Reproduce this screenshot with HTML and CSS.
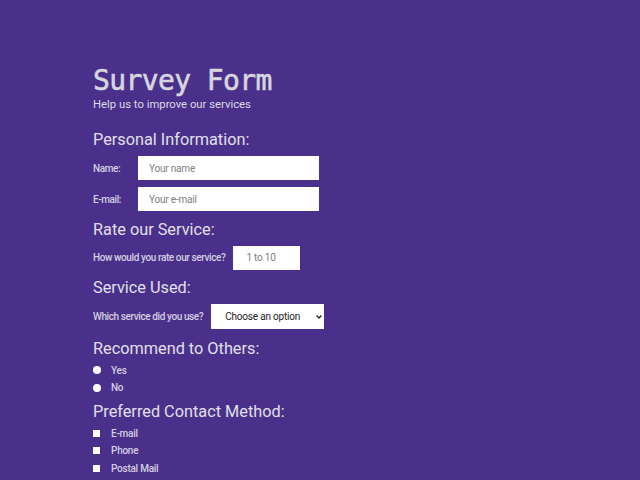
FILE: index.html
```html
<!DOCTYPE html>
<html lang="en">
<head>
<meta charset="utf-8">
<title>Survey Form</title>
<link rel="stylesheet" href="styles.css">
</head>
<body>
<main class="survey">
  <header class="intro">
    <h1 class="title">Survey Form</h1>
    <p class="subtitle">Help us to improve our services</p>
  </header>
  <form class="form">
    <h2 class="section-title">Personal Information:</h2>
    <div class="row">
      <label class="label label-fixed" for="name">Name:</label>
      <input class="field field-wide" id="name" type="text" placeholder="Your name">
    </div>
    <div class="row">
      <label class="label label-fixed" for="email">E-mail:</label>
      <input class="field field-wide" id="email" type="email" placeholder="Your e-mail">
    </div>

    <h2 class="section-title">Rate our Service:</h2>
    <div class="row">
      <label class="label" for="rate">How would you rate our service?</label>
      <input class="field field-num" id="rate" type="text" placeholder="1 to 10">
    </div>

    <h2 class="section-title">Service Used:</h2>
    <div class="row">
      <label class="label" for="service">Which service did you use?</label>
      <div class="select-wrap">
        <select class="select" id="service">
          <option>Choose an option</option>
        </select>
        <svg class="select-arrow" width="6" height="4" viewBox="0 0 6 4" aria-hidden="true">
          <path d="M0.6 0.6 L3 3 L5.4 0.6" fill="none" stroke="#222" stroke-width="1.4"/>
        </svg>
      </div>
    </div>

    <h2 class="section-title section-gap">Recommend to Others:</h2>
    <div class="choices">
      <label class="choice"><input class="radio" type="radio" name="rec"><span>Yes</span></label>
      <label class="choice"><input class="radio" type="radio" name="rec"><span>No</span></label>
    </div>

    <h2 class="section-title">Preferred Contact Method:</h2>
    <div class="choices">
      <label class="choice"><input class="check" type="checkbox"><span>E-mail</span></label>
      <label class="choice"><input class="check" type="checkbox"><span>Phone</span></label>
      <label class="choice"><input class="check" type="checkbox"><span>Postal Mail</span></label>
    </div>
  </form>
</main>
</body>
</html>
```

FILE: styles.css
```css
html, body {
  margin: 0;
  padding: 0;
  background: #4a2f8b;
  height: 100%;
  overflow: hidden;
}

body {
  font-family: Roboto, "Liberation Sans", sans-serif;
  color: #dcdce4;
}

.survey {
  padding: 65px 0 0 93px;
}

.title {
  margin: 0;
  font-family: "DejaVu Sans Mono", "Liberation Mono", monospace;
  font-size: 28px;
  line-height: 32px;
  font-weight: normal;
  -webkit-text-stroke: 0.6px #d6d6dc;
  letter-spacing: -0.6px;
  color: #d6d6dc;
}

.subtitle {
  margin: 0;
  font-size: 11.3px;
  line-height: 15px;
  color: #dcdce4;
}

.form {
  display: flex;
  flex-direction: column;
  align-items: flex-start;
  margin-top: 18px;
}

.section-title {
  margin: 0 0 7px;
  font-size: 16.3px;
  line-height: 19px;
  font-weight: normal;
  color: #e0e0e8;
}

.row {
  display: flex;
  align-items: center;
  margin-bottom: 7px;
}

.row + .section-title,
.choices + .section-title {
  margin-top: 1.5px;
}

.row + .section-gap {
  margin-top: 2.5px;
}

.label {
  font-size: 10px;
  font-weight: 500;
  letter-spacing: -0.4px;
  margin-right: 8px;
  color: #d2cfe0;
}

.label-fixed {
  width: 37px;
}

.field {
  box-sizing: border-box;
  height: 24px;
  border: 1px solid #fff;
  background: #fff;
  padding: 0 10px;
  font-family: Roboto, "Liberation Sans", sans-serif;
  font-size: 10px;
  letter-spacing: -0.2px;
  color: #333;
  outline: none;
}

.field::placeholder {
  color: #808080;
}

.field-wide {
  width: 181px;
}

.field-num {
  width: 67px;
  padding-left: 12px;
}

.select-wrap {
  position: relative;
  display: flex;
}

.select {
  appearance: none;
  -webkit-appearance: none;
  box-sizing: border-box;
  width: 113px;
  height: 25px;
  border: 1px solid #fff;
  border-radius: 0;
  background: #fff;
  font-family: Roboto, "Liberation Sans", sans-serif;
  font-size: 10px;
  letter-spacing: -0.2px;
  color: #222;
  padding: 0 0 0 13px;
  margin: 0;
}

.select-arrow {
  position: absolute;
  right: 2px;
  top: 11px;
  pointer-events: none;
}

.choices {
  display: flex;
  flex-direction: column;
  margin: -3px 0 3.5px;
}

.choice {
  display: flex;
  align-items: center;
  height: 17.5px;
  font-size: 10px;
  font-weight: 500;
  letter-spacing: -0.25px;
  color: #d2cfe0;
}

.radio,
.check {
  appearance: none;
  -webkit-appearance: none;
  margin: 0 11px 0 0;
  width: 7px;
  height: 7px;
  background: #fff;
  border: 0;
}

.radio {
  border-radius: 50%;
  width: 8px;
  height: 8px;
  margin-right: 10px;
}
```
